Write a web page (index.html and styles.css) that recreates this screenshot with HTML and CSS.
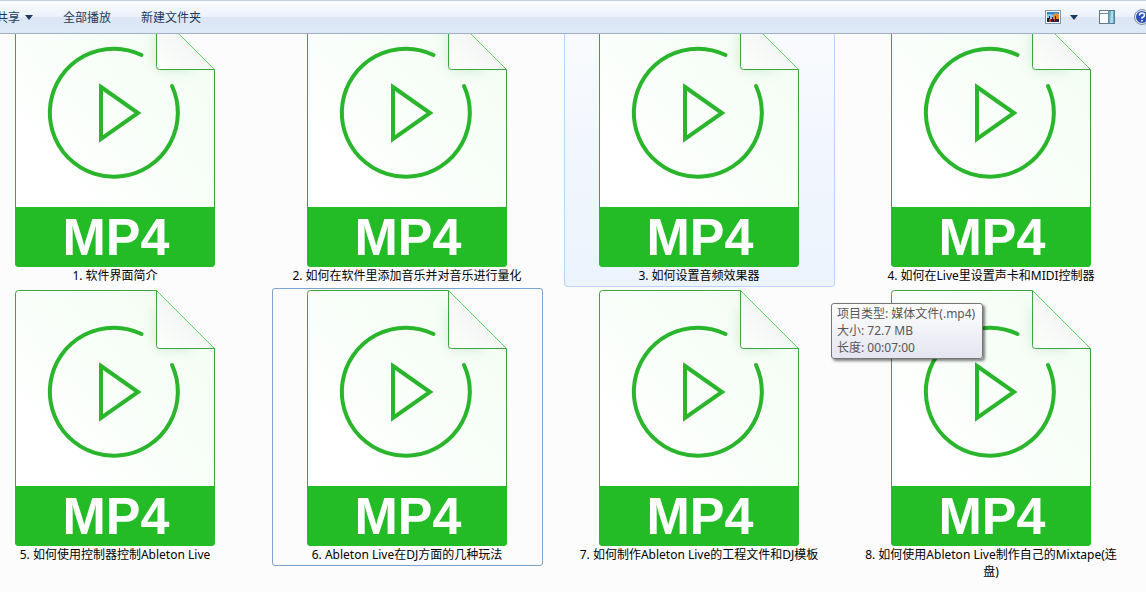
FILE: index.html
```html
<!DOCTYPE html>
<html lang="zh-CN">
<head>
<meta charset="utf-8">
<title>视频文件夹</title>
<link rel="stylesheet" href="styles.css">
</head>
<body>
<svg class="defs" width="0" height="0" aria-hidden="true">
  <defs>
    <linearGradient id="sheet" x1="1" y1="0" x2="0.3" y2="0.8">
      <stop offset="0" stop-color="#f1fdf2"/>
      <stop offset="1" stop-color="#ffffff"/>
    </linearGradient>
    <linearGradient id="fold" x1="0" y1="1" x2="0.6" y2="0.4">
      <stop offset="0" stop-color="#fdfffd"/>
      <stop offset="1" stop-color="#f1f4f2"/>
    </linearGradient>
    <filter id="soft" x="-30%" y="-30%" width="160%" height="160%">
      <feGaussianBlur stdDeviation="6"/>
    </filter>
    <clipPath id="page"><path d="M3 0H141L200 58V256H0V3Z"/></clipPath>
  </defs>
  <symbol id="mp4" viewBox="0 0 200 256">
    <path d="M3.5 .5H141.5L199.5 58.5V252.500a3 3 0 0 1-3 3H3.500a3 3 0 0 1-3-3V3.500a3 3 0 0 1 3-3Z" fill="url(#sheet)"/>
    <g clip-path="url(#page)"><path d="M140 14V50Q141 60 150 60H180Z" fill="#98c79c" opacity=".35" filter="url(#soft)"/></g>
    <path d="M141.500 .5V55.500a3 3 0 0 0 3 3H199.500Z" fill="url(#fold)"/>
    <path d="M141.500 .5L199.500 58.500" fill="none" stroke="#22bb25" stroke-width=".7"/>
    <path d="M141.500 .5H3.500a3 3 0 0 0-3 3V252.500a3 3 0 0 0 3 3H196.500a3 3 0 0 0 3-3V58.500H144.500a3 3 0 0 1-3-3Z" fill="none" stroke="#38a63b"/>
    <path d="M0 196H200V252a4 4 0 0 1-4 4H4a4 4 0 0 1-4-4Z" fill="#24bc26"/>
    <path d="M126.500 44A64 64 0 1 0 157 75" fill="none" stroke="#2ab52d" stroke-width="4" stroke-linecap="round"/>
    <path d="M86 76L123 102L86 128Z" fill="none" stroke="#2ab52d" stroke-width="4"/>
    <text class="format" x="101" y="244" text-anchor="middle">MP4</text>
  </symbol>
</svg>
<div class="explorer">
  <header class="toolbar">
    <div class="commands">
      <button class="command" type="button">共享
        <svg width="8" height="5" viewBox="0 0 8 5" aria-hidden="true"><path d="M0 0H8L4 5Z" fill="#1e395b"/></svg>
      </button>
      <button class="command" type="button">全部播放</button>
      <button class="command" type="button">新建文件夹</button>
    </div>
    <div class="tools">
      <button class="tool" type="button" aria-label="更改视图">
        <svg width="16" height="14" viewBox="0 0 16 14">
          <rect x=".5" y=".5" width="15" height="13" fill="#fff" stroke="#8496ad"/>
          <rect x="2" y="2" width="12" height="10" fill="#2f86cf"/>
          <path d="M2 5Q5 3 8 5L10 3L14 4V9H2Z" fill="#8cc8e8"/>
          <path d="M8 5L11 3L14 5V10H8Z" fill="#f08a1d"/>
          <path d="M2 8H4V6H5V9H7V7H8V9H10V6H11V9H14V12H2Z" fill="#272045"/>
          <path d="M4 9H6V12H4ZM9 9H10V11H9Z" fill="#c93a2e"/>
        </svg>
      </button>
      <button class="tool" type="button" aria-label="更多选项">
        <svg width="8" height="5" viewBox="0 0 8 5"><path d="M0 0H8L4 5Z" fill="#1e395b"/></svg>
      </button>
      <button class="tool pane" type="button" aria-label="显示预览窗格">
        <svg width="16" height="14" viewBox="0 0 16 14">
          <rect x=".5" y=".5" width="15" height="13" fill="#fff" stroke="#5f7a96"/>
          <path d="M1 3.500H9M9.500 1V13" stroke="#6f88a2" fill="none"/>
          <rect x="10" y="1" width="5" height="12" fill="#65aec6"/>
          <path d="M12 1H14V13H11Z" fill="#a9dce8"/>
        </svg>
      </button>
      <button class="tool help" type="button" aria-label="获取帮助">
        <svg width="16" height="16" viewBox="0 0 16 16">
          <circle cx="8" cy="8" r="7.500" fill="#dfe5f0" stroke="#7f8da8"/>
          <circle cx="8" cy="8" r="6" fill="#2c50b8"/>
          <path d="M5.500 6.500Q5.500 4 8 4T10.500 6.200Q10.500 7.500 8 8.800V9.700M8 11V12.500" fill="none" stroke="#fff" stroke-width="1.600"/>
        </svg>
      </button>
    </div>
  </header>
  <main class="files">
    <ul class="grid">
      <li class="file"><svg class="icon" aria-hidden="true"><use href="#mp4"/></svg><span class="name">1. 软件界面简介</span></li>
      <li class="file"><svg class="icon" aria-hidden="true"><use href="#mp4"/></svg><span class="name">2. 如何在软件里添加音乐并对音乐进行量化</span></li>
      <li class="file hovered"><svg class="icon" aria-hidden="true"><use href="#mp4"/></svg><span class="name">3. 如何设置音频效果器</span></li>
      <li class="file"><svg class="icon" aria-hidden="true"><use href="#mp4"/></svg><span class="name">4. 如何在Live里设置声卡和MIDI控制器</span></li>
      <li class="file"><svg class="icon" aria-hidden="true"><use href="#mp4"/></svg><span class="name">5. 如何使用控制器控制Ableton Live</span></li>
      <li class="file focused"><svg class="icon" aria-hidden="true"><use href="#mp4"/></svg><span class="name">6. Ableton Live在DJ方面的几种玩法</span></li>
      <li class="file"><svg class="icon" aria-hidden="true"><use href="#mp4"/></svg><span class="name">7. 如何制作Ableton Live的工程文件和DJ模板</span></li>
      <li class="file"><svg class="icon" aria-hidden="true"><use href="#mp4"/></svg><span class="name">8. 如何使用Ableton Live制作自己的Mixtape(连盘)</span></li>
    </ul>
  </main>
  <div class="tooltip" role="tooltip">
    <div>项目类型: 媒体文件(.mp4)</div>
    <div>大小: 72.7 MB</div>
    <div>长度: 00:07:00</div>
  </div>
</div>
</body>
</html>
```
FILE: styles.css
```css
* { box-sizing: border-box; }

body {
  margin: 0;
  background: #fcfcfc;
  color: #000;
  font: 12px/17px "Noto Sans", "Noto Sans CJK SC", sans-serif;
}

.defs { position: absolute; }

.explorer {
  position: relative;
  display: flex;
  flex-direction: column;
  height: 100vh;
  overflow: hidden;
}

.toolbar {
  flex: none;
  display: flex;
  justify-content: space-between;
  height: 34px;
  border-top: 1px solid #c3cede;
  border-bottom: 1px solid #a0afc3;
  background: linear-gradient(#fafcff, #eaf1fb 50%, #dce6f4 50%, #dde9f7);
}

.commands { display: flex; gap: 30px; margin-left: -4px; }

.command,
.tool {
  display: flex;
  align-items: center;
  gap: 5px;
  padding: 0;
  border: 0;
  background: none;
  color: #1e395b;
  font: inherit;
}

.tools { display: flex; gap: 9px; margin-right: -4px; }
.pane { margin-left: 12px; }
.help { margin-left: 10px; }

.files { flex: 1; min-height: 0; overflow: hidden; }

/* The list is scrolled part of the way down and to the right. */
.grid {
  display: grid;
  grid-template-columns: repeat(auto-fill, 271px);
  align-items: start;
  gap: 1px 21px;
  margin: -25px 0 0 -20px;
  padding: 0;
  list-style: none;
}

.file {
  display: flex;
  flex-direction: column;
  align-items: center;
  padding: 1px 5px 2px 4px;
  border: 1px solid transparent;
  border-radius: 3px;
}

.hovered {
  border-color: #b8d6fb;
  background: linear-gradient(#fafbfd, #ebf3fd);
}

.focused { border-color: #7da2ce; }

.icon { width: 200px; height: 256px; }

.format {
  fill: #fff;
  font: bold 52px "Liberation Sans", Arial, sans-serif;
}

.name { text-align: center; }

.tooltip {
  position: absolute;
  top: 303px;
  left: 831px;
  padding: 1px 7px 2px 5px;
  border: 1px solid #767676;
  border-radius: 3px;
  background: linear-gradient(#fff, #e4e5f0);
  box-shadow: 2px 2px 3px rgba(0, 0, 0, .5);
  color: #575757;
}
```
